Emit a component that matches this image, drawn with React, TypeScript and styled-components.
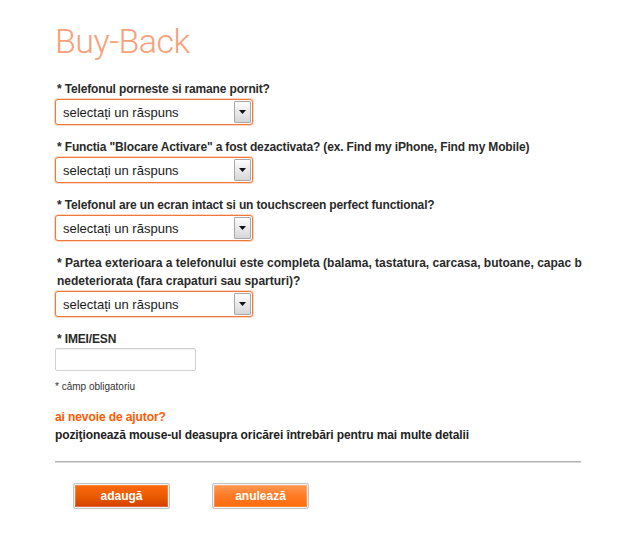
import * as React from "react";
import styled, { createGlobalStyle } from "styled-components";

const GlobalStyle = createGlobalStyle`
    body {
        margin: 0;
        background: #fff;
        font-family: "Liberation Sans", Arial, sans-serif;
        color: #222;
    }
`

const Page = styled.div`
    width: 529px;
    padding: 16px 0 0 55px;
    overflow: hidden;
`

const Title = styled.h1`
    margin: 4px 0 18px 0;
    font-family: Roboto, "Liberation Sans", sans-serif;
    font-weight: 300;
    font-size: 34px;
    line-height: 42px;
    color: #f7a07a;
    letter-spacing: -0.5px;
`

const Field = styled.div`
    margin-bottom: 13px;
`

const Label = styled.label<{ $loose?: boolean }>`
    display: block;
    font-size: 12px;
    font-weight: bold;
    line-height: 18px;
    color: #2a2a2a;
    letter-spacing: ${p => p.$loose ? "0" : "-0.15px"};
    padding-left: 2px;
    margin-bottom: 1px;
`

const Line = styled.span`
    display: block;
    white-space: nowrap;
`

const SelectWrap = styled.div`
    display: flex;
    width: 196px;
    height: 24px;
    border: 1px solid #f0783a;
    border-radius: 3px;
    box-shadow: 0 0 0 1px rgba(245, 140, 80, 0.35);
    overflow: hidden;
    background: #fff;
`

const Select = styled.select`
    flex: 1;
    appearance: none;
    border: none;
    outline: none;
    background: transparent;
    font-family: "Liberation Sans", Arial, sans-serif;
    font-size: 13px;
    color: #1a1a1a;
    padding: 0 0 0 7px;
`

const Arrow = styled.span`
    width: 15px;
    margin: 1px 1px 1px 0;
    border: 1px solid #a8a8a8;
    border-radius: 1px;
    background: linear-gradient(#fdfdfd, #d6d6d6);
    display: flex;
    align-items: center;
    justify-content: center;
`

const TextInput = styled.input`
    display: block;
    width: 141px;
    height: 23px;
    margin-top: -1px;
    border: 1px solid #d2d2d2;
    border-radius: 2px;
    box-shadow: inset 0 1px 1px rgba(0, 0, 0, 0.06);
    padding: 0 4px;
    box-sizing: border-box;
`

const Note = styled.p`
    margin: 10px 0 0 0;
    font-size: 10px;
    color: #333;
`

const Help = styled.div`
    margin-top: 16px;
    font-size: 12px;
    font-weight: bold;
    line-height: 18px;
    letter-spacing: -0.1px;
`

const HelpTitle = styled.div`
    color: #ff5a00;
`

const Divider = styled.hr`
    margin: 17px 0 0 0;
    width: 526px;
    border: none;
    border-top: 1px solid #b4b4b4;
    border-bottom: 1px solid #d8d8d8;
`

const Buttons = styled.div`
    display: flex;
    gap: 42px;
    padding: 20px 0 0 18px;
`

const Button = styled.button<{ $variant: "dark" | "light" }>`
    width: 97px;
    height: 26px;
    border: 1px solid #c4c4c4;
    border-radius: 2px;
    box-shadow: inset 0 0 0 1px #f4f4f4, inset 0 0 0 2px rgba(255, 255, 255, 0.2);
    background: ${p => p.$variant === "dark"
        ? "linear-gradient(#ff6a10, #e85a00 55%, #d23c00)"
        : "linear-gradient(#ff9c5a, #ff7a24 50%, #ff6a0a)"};
    color: #fff;
    font-family: "Liberation Sans", Arial, sans-serif;
    font-size: 12px;
    font-weight: bold;
    cursor: pointer;
    padding: 0;
`

const questions: string[][] = [
    ["* Telefonul porneste si ramane pornit?"],
    ["* Functia \"Blocare Activare\" a fost dezactivata? (ex. Find my iPhone, Find my Mobile)"],
    ["* Telefonul are un ecran intact si un touchscreen perfect functional?"],
    [
        "* Partea exterioara a telefonului este completa (balama, tastatura, carcasa, butoane, capac b",
        "nedeteriorata (fara crapaturi sau sparturi)?",
    ],
]

function DropDown() {
    return (
        <SelectWrap>
            <Select defaultValue="">
                <option value="">selectați un răspuns</option>
                <option value="da">da</option>
                <option value="nu">nu</option>
            </Select>
            <Arrow>
                <svg width="7" height="4" viewBox="0 0 7 4">
                    <path d="M0 0h7L3.5 4z" fill="#111" />
                </svg>
            </Arrow>
        </SelectWrap>
    )
}

function App() {
    return (
        <Page>
            <GlobalStyle />
            <Title>Buy-Back</Title>
            {questions.map((lines, index) => (
                <Field key={index}>
                    <Label $loose={lines.length > 1}>
                        {lines.map((text, i) => <Line key={i}>{text}</Line>)}
                    </Label>
                    <DropDown />
                </Field>
            ))}
            <Label>* IMEI/ESN</Label>
            <TextInput type="text" />
            <Note>* câmp obligatoriu</Note>
            <Help>
                <HelpTitle>ai nevoie de ajutor?</HelpTitle>
                <div>poziţionează mouse-ul deasupra oricărei întrebări pentru mai multe detalii</div>
            </Help>
            <Divider />
            <Buttons>
                <Button $variant="dark">adaugă</Button>
                <Button $variant="light">anulează</Button>
            </Buttons>
        </Page>
    )
}

export default App;
